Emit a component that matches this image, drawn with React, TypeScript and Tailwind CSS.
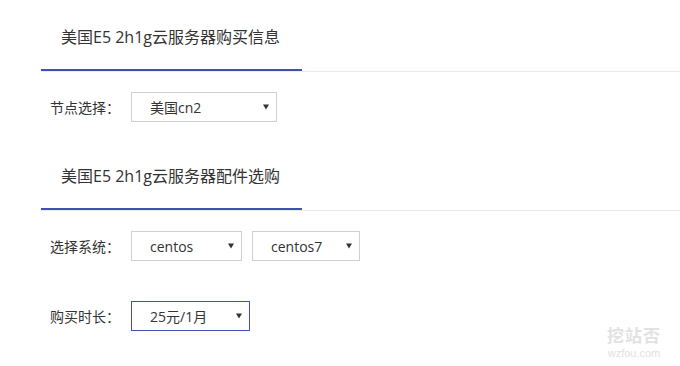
import React from 'react';

const font = { fontFamily: '"Open Sans", "Noto Sans CJK SC", sans-serif' };

const Arrow = () => (
  <svg width="6" height="6" viewBox="0 0 6 6" className="shrink-0">
    <path d="M0 0.5 L6 0.5 L3 5.5 Z" fill="#333" />
  </svg>
);

interface SelectBoxProps {
  value: string;
  width: string;
  active?: boolean;
}

const SelectBox: React.FC<SelectBoxProps> = ({ value, width, active }) => (
  <div
    className={`h-[30px] ${width} flex items-center justify-between pl-[18px] pr-[7px] border ${
      active ? 'border-[#3f51b5]' : 'border-[#d0d0d0]'
    } bg-white text-[14px] text-[#333]`}
  >
    <span>{value}</span>
    <Arrow />
  </div>
);

const SectionHeader: React.FC<{ title: string }> = ({ title }) => (
  <div className="ml-[41px] border-b border-[#ebebeb]">
    <div className="w-[261px] h-[71px] border-b-2 border-[#3f51b5] pl-[20px] pt-[5px] flex items-center text-[16px] text-[#333]">
      {title}
    </div>
  </div>
);

const Row: React.FC<{ label: string; children: React.ReactNode; className?: string }> = ({ label, children, className }) => (
  <div className={`flex items-center ${className || ''}`}>
    <div className="ml-[50px] w-[81px] text-[14px] text-[#333]">{label}</div>
    {children}
  </div>
);

export default function App() {
  return (
    <div className="relative w-[680px] h-[366px] bg-white overflow-hidden" style={font}>
      <SectionHeader title="美国E5 2h1g云服务器购买信息" />
      <Row label="节点选择：" className="mt-[20px]">
        <SelectBox value="美国cn2" width="w-[146px]" />
      </Row>

      <div className="mt-[17px]">
        <SectionHeader title="美国E5 2h1g云服务器配件选购" />
      </div>
      <Row label="选择系统：" className="mt-[20px]">
        <SelectBox value="centos" width="w-[111px]" />
        <div className="ml-[10px]">
          <SelectBox value="centos7" width="w-[108px]" />
        </div>
      </Row>
      <Row label="购买时长：" className="mt-[40px]">
        <SelectBox value="25元/1月" width="w-[119px]" active />
      </Row>

      {/* watermark */}
      <div className="absolute left-[607px] top-[327px] flex flex-col items-center text-[#e2e2e2]">
        <span className="text-[17px] leading-[18px] font-bold tracking-[1px]">挖站否</span>
        <span className="text-[11px] leading-[12px] mt-[2px]" style={{ fontFamily: '"Liberation Sans", sans-serif' }}>wzfou.com</span>
      </div>
    </div>
  );
}
